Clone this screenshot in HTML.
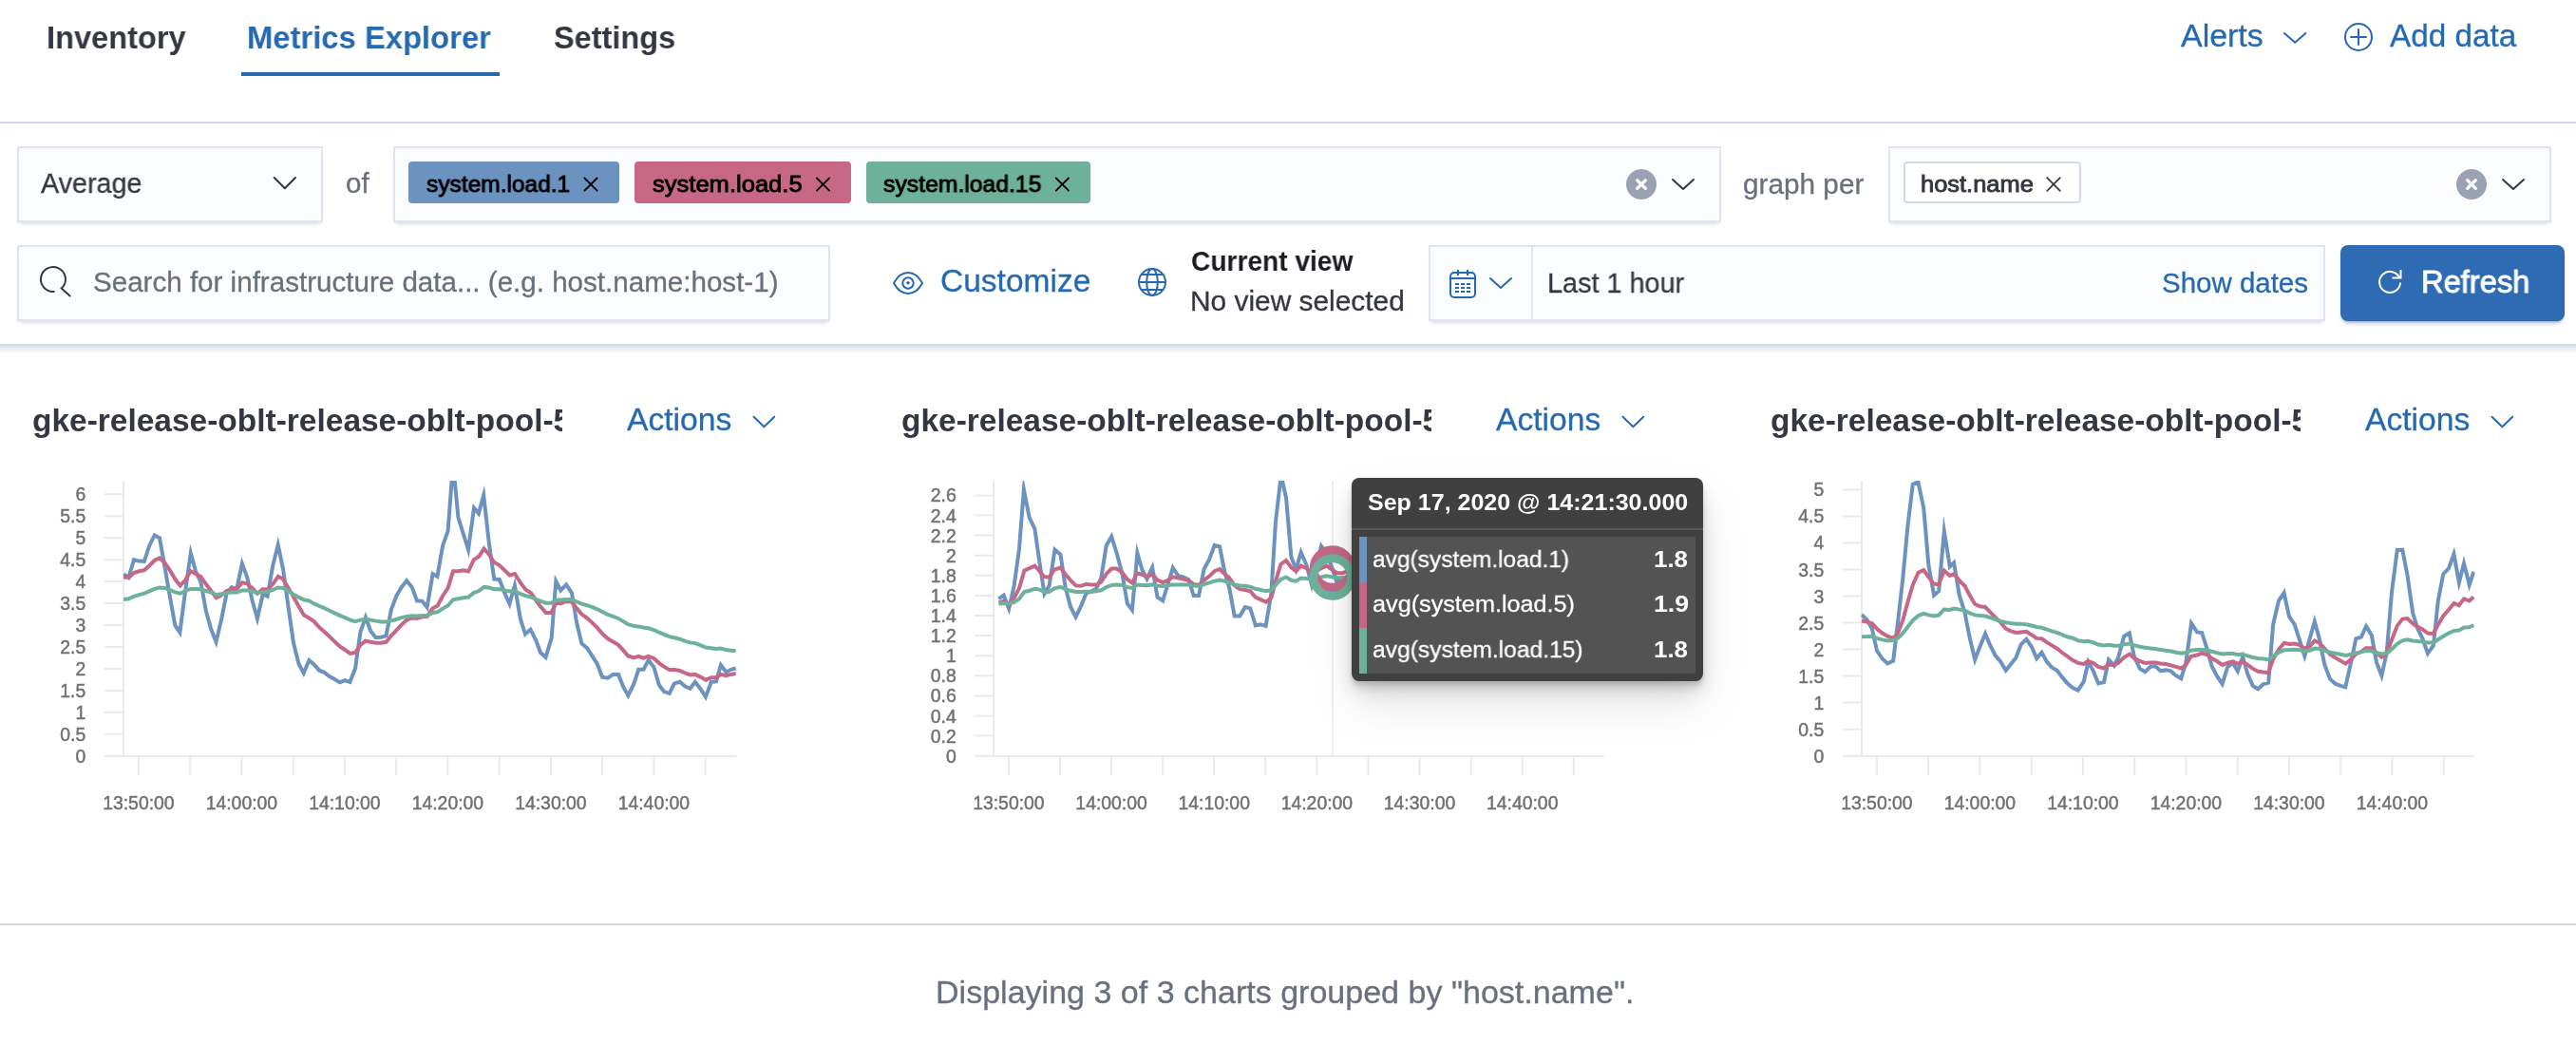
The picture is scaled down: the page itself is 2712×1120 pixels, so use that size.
<!DOCTYPE html>
<html lang="en"><head><meta charset="utf-8"><title>Metrics Explorer</title>
<style>
*{box-sizing:border-box;margin:0;padding:0}
html,body{width:2712px;height:1120px;overflow:hidden;background:#fff}
body{position:relative;font-family:"Liberation Sans",sans-serif;color:#343741}
a{text-decoration:none}
h3,p,label,strong{font-weight:400}
.t{will-change:transform;position:absolute;white-space:nowrap;line-height:1;transform-origin:0 0;display:block}
.t{-webkit-text-stroke:.3px currentColor}
.t.b{font-weight:700;-webkit-text-stroke:0}
.t.m{-webkit-text-stroke:.9px currentColor}
.abs{position:absolute}
.box{position:absolute;background:#fbfcfd;box-shadow:inset 0 0 0 2px #e1e4ef,0 3px 3px -2px rgba(152,162,179,.28),0 6px 5px -4px rgba(152,162,179,.2)}
.pill{position:absolute;top:170px;height:44px;border-radius:4px}
svg{will-change:transform;position:absolute;left:0;top:0;overflow:visible;pointer-events:none}
.ax text{font-family:"Liberation Sans",sans-serif;font-size:19.4px;fill:#707070;stroke:#707070;stroke-width:.45px}
</style></head><body>
<header>
<nav class="tabs">
<a class="t b" style="left:48.73px;top:22.66px;font-size:33.12px;color:#343741;transform:scaleX(0.9843)">Inventory</a>
<a class="t b" style="left:260.02px;top:22.66px;font-size:33.12px;color:#2569b1;transform:scaleX(0.9900)">Metrics Explorer</a>
<div class="abs" style="left:254px;top:76px;width:272px;height:4px;background:#2569b1"></div>
<a class="t b" style="left:582.80px;top:22.66px;font-size:33.12px;color:#343741;transform:scaleX(0.9808)">Settings</a>
</nav>
<div class="header-links">
<a class="t" style="left:2295.65px;top:21.46px;font-size:33.12px;color:#2569b1;transform:scaleX(1.0251)">Alerts</a>
<a class="t" style="left:2516.45px;top:21.46px;font-size:33.12px;color:#2569b1;transform:scaleX(1.0050)">Add data</a>
<svg width="2712" height="1120" viewBox="0 0 2712 1120" fill="none" aria-hidden="true">
<polyline points="2405.0,34.9 2416.2,44.8 2427.3,34.9" stroke="#2569b1" stroke-width="2" stroke-linecap="round" stroke-linejoin="round"/>
<circle cx="2483" cy="39" r="14" stroke="#2569b1" stroke-width="2"/>
<path d="M2475 39H2491M2483 31V47" stroke="#2569b1" stroke-width="2" stroke-linecap="round"/>
</svg>
</div>
<div class="abs" style="left:0;top:128px;width:2712px;height:2px;background:#d0d6e4"></div>
</header>
<section class="toolbar">
<div class="abs" style="left:0;top:362px;width:2712px;height:10px;background:linear-gradient(#d0d5e2,#e4e7ee 35%,rgba(255,255,255,0))"></div>
<div class="row aggregation">
<div class="box" style="left:18px;top:154px;width:322px;height:80px"></div>
<span class="t" style="left:42.95px;top:178.97px;font-size:28.98px;color:#343741;transform:scaleX(0.9910)">Average</span>
<label class="t" style="left:363.93px;top:179.47px;font-size:28.98px;color:#69707d;transform:scaleX(1.0200)">of</label>
<div class="box" style="left:414px;top:154px;width:1398px;height:80px"></div>
<div class="pill" style="left:430px;width:222px;background:#6c92bf"></div>
<span class="t m" style="left:449.44px;top:182.07px;font-size:24.84px;color:#000;transform:scaleX(0.9872)">system.load.1</span>
<div class="pill" style="left:668px;width:228px;background:#c66785"></div>
<span class="t m" style="left:686.76px;top:182.07px;font-size:24.84px;color:#000;transform:scaleX(1.0289)">system.load.5</span>
<div class="pill" style="left:912px;width:236px;background:#6db19a"></div>
<span class="t m" style="left:929.95px;top:182.07px;font-size:24.84px;color:#000;transform:scaleX(0.9966)">system.load.15</span>
<label class="t" style="left:1835.43px;top:179.67px;font-size:28.98px;color:#69707d;transform:scaleX(1.0270)">graph per</label>
<div class="box" style="left:1988px;top:154px;width:698px;height:80px"></div>
<div class="pill" style="left:2004px;width:187px;background:#fff;border:2px solid #d3dae6"></div>
<span class="t m" style="left:2021.74px;top:181.97px;font-size:24.84px;color:#343741;transform:scaleX(1.0250)">host.name</span>
<svg width="2712" height="1120" viewBox="0 0 2712 1120" fill="none" aria-hidden="true">
<polyline points="288.7,187.0 299.9,198.2 311.0,187.0" stroke="#343741" stroke-width="2" stroke-linecap="round" stroke-linejoin="round"/>
<polyline points="1761.0,189.0 1772.0,199.0 1783.0,189.0" stroke="#343741" stroke-width="2" stroke-linecap="round" stroke-linejoin="round"/>
<polyline points="2635.0,189.0 2646.0,199.0 2657.0,189.0" stroke="#343741" stroke-width="2" stroke-linecap="round" stroke-linejoin="round"/>
<circle cx="1728" cy="194" r="16" fill="#9aa1b3"/>
<path d="M1723.6 189.6l8.8 8.8M1732.4 189.6l-8.8 8.8" stroke="#fff" stroke-width="3.2" stroke-linecap="round"/>
<circle cx="2602" cy="194" r="16" fill="#9aa1b3"/>
<path d="M2597.6 189.6l8.8 8.8M2606.4 189.6l-8.8 8.8" stroke="#fff" stroke-width="3.2" stroke-linecap="round"/>
<path d="M615.4 187.5l13.2 13.2M628.6 187.5l-13.2 13.2" stroke="#000" stroke-width="1.8" stroke-linecap="round"/>
<path d="M859.9 187.5l13.2 13.2M873.1 187.5l-13.2 13.2" stroke="#000" stroke-width="1.8" stroke-linecap="round"/>
<path d="M1111.8 187.5l13.2 13.2M1125.0 187.5l-13.2 13.2" stroke="#000" stroke-width="1.8" stroke-linecap="round"/>
<path d="M2155.2 187.2l13.6 13.6M2168.8 187.2l-13.6 13.6" stroke="#343741" stroke-width="1.7" stroke-linecap="round"/>
</svg>
</div>
<div class="row query">
<div class="box" style="left:18px;top:258px;width:856px;height:80px"></div>
<span class="t" style="left:98.43px;top:283.47px;font-size:28.98px;color:#69707d;transform:scaleX(1.0207)">Search for infrastructure data... (e.g. host.name:host-1)</span>
<a class="t" style="left:989.54px;top:279.36px;font-size:33.12px;color:#2569b1;transform:scaleX(1.0124)">Customize</a>
<strong class="t b" style="left:1253.93px;top:260.97px;font-size:28.98px;color:#1a1c21;transform:scaleX(0.9706)">Current view</strong>
<span class="t" style="left:1253.39px;top:303.27px;font-size:28.98px;color:#343741;transform:scaleX(1.0312)">No view selected</span>
<div class="box" style="left:1504px;top:258px;width:944px;height:80px"></div>
<div class="abs" style="left:1612px;top:260px;width:2px;height:76px;background:#e1e4ef"></div>
<span class="t" style="left:1628.56px;top:284.27px;font-size:28.98px;color:#343741;transform:scaleX(0.9945)">Last 1 hour</span>
<a class="t" style="left:2275.64px;top:284.27px;font-size:28.98px;color:#2569b1;transform:scaleX(1.0173)">Show dates</a>
<div class="abs" style="left:2464px;top:258px;width:236px;height:80px;border-radius:8px;background:#2e6bb2;box-shadow:0 4px 5px -2px rgba(46,90,150,.35),0 2px 2px -1px rgba(46,90,150,.3)"></div>
<span class="t m" style="left:2548.67px;top:279.96px;font-size:33.12px;color:#fff;transform:scaleX(0.9866)">Refresh</span>
<svg width="2712" height="1120" viewBox="0 0 2712 1120" fill="none" aria-hidden="true">
<path d="M56.8 306.97A13 13 0 1 1 65.9 302.4M64.4 303.2L73.6 311.5" stroke="#343741" stroke-width="2" stroke-linecap="round"/>
<path d="M941 298C945 290.5 950 287 956 287S967 290.5 971 298C967 305.5 962 309 956 309S945 305.5 941 298Z" stroke="#2569b1" stroke-width="2" stroke-linejoin="round"/>
<circle cx="956" cy="298" r="5.7" stroke="#2569b1" stroke-width="2"/><circle cx="956" cy="297.8" r="1.7" fill="#2569b1"/>
<g stroke="#2569b1" stroke-width="2"><circle cx="1213" cy="297" r="14"/><ellipse cx="1213" cy="297" rx="5.8" ry="14"/><path d="M1199 297H1227M1201.5 289H1224.5M1201.5 305H1224.5"/></g>
<g stroke="#2569b1" stroke-width="2"><rect x="1527" y="287" width="26" height="26" rx="4"/><path d="M1527 293H1553M1535 284V290M1545 284V290"/></g>
<rect x="1532" y="298" width="4" height="2" fill="#2569b1"/>
<rect x="1538" y="298" width="4" height="2" fill="#2569b1"/>
<rect x="1544" y="298" width="4" height="2" fill="#2569b1"/>
<rect x="1532" y="302" width="4" height="2" fill="#2569b1"/>
<rect x="1538" y="302" width="4" height="2" fill="#2569b1"/>
<rect x="1544" y="302" width="4" height="2" fill="#2569b1"/>
<rect x="1532" y="306" width="4" height="2" fill="#2569b1"/>
<rect x="1538" y="306" width="4" height="2" fill="#2569b1"/>
<rect x="1544" y="306" width="4" height="2" fill="#2569b1"/>
<polyline points="1569.0,293.0 1580.0,303.0 1591.0,293.0" stroke="#2569b1" stroke-width="2" stroke-linecap="round" stroke-linejoin="round"/>
<path d="M2526.4 293A11 11 0 1 0 2527.1 297.5M2518.5 292.5H2527.5V284" stroke="#fff" stroke-width="2" stroke-linecap="butt"/>
</svg>
</div>
</section>
<main>
<article class="chart">
<div class="abs" style="left:30.0px;top:420px;width:562.0px;height:52px;overflow:hidden"><h3 class="t b" style="left:4.0px;top:5.97px;font-size:33px;color:#343741;transform:scaleX(1.0142)">gke-release-oblt-release-oblt-pool-5fd2b9c4-x7kq</h3></div>
<a class="t" style="left:659.85px;top:425.46px;font-size:33.12px;color:#2569b1;transform:scaleX(1.0155)">Actions</a>
<svg width="2712" height="1120" viewBox="0 0 2712 1120" fill="none" aria-hidden="true">
<polyline points="793.5,438.7 804.4,449.2 815.2,438.7" stroke="#2569b1" stroke-width="2" stroke-linecap="round" stroke-linejoin="round"/>
<g class="ax">
<path d="M130.1 506V796M110.1 796H775.0" stroke="#eaeaea" stroke-width="2"/>
<path d="M110.1 795.7H130.1M110.1 772.8H130.1M110.1 749.8H130.1M110.1 726.9H130.1M110.1 703.9H130.1M110.1 681.0H130.1M110.1 658.0H130.1M110.1 635.1H130.1M110.1 612.1H130.1M110.1 589.2H130.1M110.1 566.2H130.1M110.1 543.2H130.1M110.1 520.3H130.1M145.9 796V816M200.2 796V816M254.4 796V816M308.6 796V816M362.9 796V816M417.1 796V816M471.4 796V816M525.6 796V816M579.9 796V816M634.1 796V816M688.4 796V816M742.6 796V816" stroke="#eaeaea" stroke-width="2"/>
<text x="90.3" y="802.7" text-anchor="end">0</text>
<text x="90.3" y="779.8" text-anchor="end">0.5</text>
<text x="90.3" y="756.8" text-anchor="end">1</text>
<text x="90.3" y="733.9" text-anchor="end">1.5</text>
<text x="90.3" y="710.9" text-anchor="end">2</text>
<text x="90.3" y="688.0" text-anchor="end">2.5</text>
<text x="90.3" y="665.0" text-anchor="end">3</text>
<text x="90.3" y="642.1" text-anchor="end">3.5</text>
<text x="90.3" y="619.1" text-anchor="end">4</text>
<text x="90.3" y="596.2" text-anchor="end">4.5</text>
<text x="90.3" y="573.2" text-anchor="end">5</text>
<text x="90.3" y="550.2" text-anchor="end">5.5</text>
<text x="90.3" y="527.3" text-anchor="end">6</text>
<text x="145.9" y="852" text-anchor="middle">13:50:00</text>
<text x="254.4" y="852" text-anchor="middle">14:00:00</text>
<text x="362.9" y="852" text-anchor="middle">14:10:00</text>
<text x="471.4" y="852" text-anchor="middle">14:20:00</text>
<text x="579.9" y="852" text-anchor="middle">14:30:00</text>
<text x="688.4" y="852" text-anchor="middle">14:40:00</text>
</g>
<clipPath id="k1"><rect x="129.5" y="506" width="646.1" height="290"/></clipPath><g clip-path="url(#k1)">
<polyline points="130.1,604.4 135.3,608.0 141.1,589.2 146.4,590.6 151.8,591.0 157.2,574.4 162.7,563.4 168.0,566.2 173.5,597.2 178.9,628.2 184.3,658.2 189.4,665.8 195.1,622.0 200.8,582.3 206.0,601.3 211.4,612.7 216.8,642.7 222.2,662.3 227.5,675.7 233.1,652.0 238.5,625.1 244.0,618.1 249.1,620.4 254.9,593.4 260.2,607.5 265.6,632.3 270.9,651.1 276.7,625.6 281.6,627.7 287.3,595.1 292.7,573.5 298.1,599.3 303.5,638.5 309.0,676.8 314.4,698.5 319.7,708.6 325.4,695.0 330.6,699.5 336.1,705.7 341.5,707.8 346.9,712.0 352.3,715.1 357.7,718.2 363.2,716.1 368.4,717.9 374.0,703.7 379.4,665.4 384.9,649.7 390.3,664.4 395.7,671.2 401.1,670.8 406.5,669.1 411.9,641.6 417.4,627.2 422.8,617.9 428.2,611.2 433.6,617.9 439.0,632.3 444.5,632.8 449.6,639.3 455.6,604.1 460.4,606.8 466.1,574.4 471.6,558.9 477.0,487.6 482.4,544.5 487.8,562.0 493.0,578.6 499.0,534.7 503.9,540.6 509.2,521.3 514.9,572.4 520.3,609.6 525.8,610.0 531.2,624.1 536.4,635.6 541.9,616.3 547.9,651.6 553.0,667.4 558.5,662.6 564.4,674.4 568.9,686.8 574.5,691.8 580.7,671.3 585.3,611.9 590.3,621.5 596.2,615.4 602.0,624.3 607.2,655.8 612.4,677.5 618.1,682.2 623.7,690.9 628.9,699.2 634.1,712.6 639.8,713.6 645.4,710.1 651.0,709.9 656.2,722.9 661.3,732.2 667.1,720.5 672.3,704.8 677.5,704.8 682.7,694.8 688.4,702.3 694.0,721.3 699.2,728.1 704.8,729.8 709.9,719.4 715.7,717.8 721.3,722.5 726.6,724.8 731.8,717.8 737.4,725.0 742.9,733.6 748.8,717.8 754.0,717.4 758.9,700.0 764.4,707.5 769.5,704.8 774.6,703.3" stroke="#6c92bf" stroke-width="4" stroke-linejoin="miter" stroke-miterlimit="10" stroke-linecap="butt"/>
<polyline points="130.1,607.5 135.5,607.9 140.9,603.0 146.4,601.3 151.8,600.3 157.2,595.5 162.6,590.0 168.0,587.3 173.5,592.6 178.9,600.3 184.3,609.6 189.7,616.4 195.1,610.6 200.7,601.1 206.0,604.0 211.4,607.1 216.8,614.8 222.2,622.0 227.7,629.2 233.1,626.6 238.5,622.0 243.9,619.9 249.3,619.9 254.8,613.3 260.2,614.4 265.6,618.9 271.0,624.8 276.4,620.3 281.9,620.6 287.3,614.8 292.8,606.8 298.1,609.6 303.5,618.9 309.0,628.2 314.4,638.1 319.8,647.2 325.2,650.5 330.6,654.1 336.1,660.3 341.5,665.0 346.9,670.0 352.3,675.4 357.7,680.3 363.2,684.0 368.6,687.8 374.0,687.1 379.4,678.9 384.8,674.7 390.3,675.8 395.7,676.8 401.1,676.8 406.5,675.8 411.9,669.1 417.4,663.4 422.8,657.6 428.2,652.6 433.6,650.5 439.0,651.0 444.5,649.3 449.9,648.9 455.3,640.6 460.7,637.5 466.1,627.2 471.6,618.9 477.0,601.3 482.4,601.3 487.8,600.3 493.1,601.5 498.7,589.3 504.1,585.8 509.5,577.5 514.9,583.7 520.3,592.0 525.8,595.1 531.2,600.3 536.6,605.5 542.0,604.0 547.9,613.4 553.4,620.6 559.0,624.3 564.4,632.0 568.9,638.2 574.7,645.0 580.3,645.0 585.5,634.7 590.6,635.1 596.2,633.0 601.6,633.4 607.2,640.3 612.4,646.5 618.1,650.6 623.7,655.8 628.9,660.9 634.1,667.1 639.8,672.3 645.4,675.4 651.0,678.9 656.2,684.7 661.3,690.5 667.1,692.4 672.3,690.9 677.5,692.6 682.6,690.9 688.4,693.0 694.0,698.1 699.2,701.9 704.8,705.0 709.9,705.0 715.7,706.0 721.3,708.5 726.7,710.5 731.8,709.9 737.4,712.6 743.0,715.7 748.8,713.2 754.0,713.2 758.7,709.9 764.3,711.2 769.5,709.9 774.6,709.1" stroke="#c66785" stroke-width="4" stroke-linejoin="miter" stroke-miterlimit="10" stroke-linecap="butt"/>
<polyline points="130.1,630.9 135.5,630.3 140.9,627.8 146.4,626.1 151.8,624.7 157.2,622.4 162.6,619.9 168.0,618.5 173.5,618.9 178.9,621.0 184.3,623.4 189.7,624.7 195.1,622.0 200.6,619.9 206.0,619.9 211.4,620.3 216.8,622.0 222.2,623.7 227.7,626.1 233.1,625.3 238.5,624.1 243.9,623.4 249.3,623.4 254.8,621.6 260.2,621.4 265.6,622.4 271.0,624.1 276.4,623.0 281.9,623.0 287.3,621.0 292.7,618.5 298.1,618.9 303.5,622.0 309.0,625.7 314.4,628.6 319.8,631.3 325.2,632.3 330.6,635.4 336.1,637.9 341.5,640.2 346.9,642.7 352.3,645.4 357.7,647.8 363.2,650.1 368.6,652.6 374.0,654.1 379.4,652.6 384.8,651.6 390.3,652.6 395.7,653.6 401.1,654.5 406.5,654.5 411.9,653.4 417.4,652.0 422.8,650.1 428.2,648.9 433.6,648.3 439.0,648.5 444.5,648.1 449.9,647.8 455.3,645.2 460.7,644.1 466.1,640.6 471.6,637.5 477.0,631.3 482.4,630.3 487.8,629.2 493.2,628.6 498.7,624.1 504.1,622.0 509.5,617.9 514.9,618.5 520.3,620.3 525.8,620.3 531.2,621.4 536.6,622.4 542.0,622.0 547.9,625.2 553.4,627.2 559.0,628.5 564.4,631.0 568.9,632.6 574.7,634.7 580.3,634.7 585.5,631.4 590.6,631.4 596.2,631.0 601.6,631.0 607.2,633.4 612.4,635.7 618.1,637.2 623.7,639.2 628.9,641.3 634.1,644.0 639.8,646.9 645.4,648.9 651.0,651.0 656.2,654.1 661.3,657.2 667.1,658.9 672.3,659.5 677.5,660.5 682.6,661.3 688.4,663.0 694.0,665.7 699.2,667.8 704.8,670.2 709.9,671.3 715.7,672.7 721.3,674.8 726.7,676.4 731.8,677.1 737.4,679.1 743.0,681.6 748.8,682.2 754.0,683.0 758.7,682.6 764.3,684.1 769.5,684.7 774.6,685.1" stroke="#6db19a" stroke-width="4" stroke-linejoin="miter" stroke-miterlimit="10" stroke-linecap="butt"/>
</g>
</svg>
</article>
<article class="chart">
<div class="abs" style="left:945.0px;top:420px;width:562.0px;height:52px;overflow:hidden"><h3 class="t b" style="left:4.0px;top:5.97px;font-size:33px;color:#343741;transform:scaleX(1.0142)">gke-release-oblt-release-oblt-pool-5fd2b9c4-x7kq</h3></div>
<a class="t" style="left:1574.85px;top:425.46px;font-size:33.12px;color:#2569b1;transform:scaleX(1.0155)">Actions</a>
<svg width="2712" height="1120" viewBox="0 0 2712 1120" fill="none" aria-hidden="true">
<polyline points="1708.5,438.7 1719.3,449.2 1730.2,438.7" stroke="#2569b1" stroke-width="2" stroke-linecap="round" stroke-linejoin="round"/>
<g class="ax">
<path d="M1046.1 506V796M1026.1 796H1688.8" stroke="#eaeaea" stroke-width="2"/>
<path d="M1026.1 795.7H1046.1M1026.1 774.6H1046.1M1026.1 753.5H1046.1M1026.1 732.4H1046.1M1026.1 711.3H1046.1M1026.1 690.2H1046.1M1026.1 669.1H1046.1M1026.1 648.0H1046.1M1026.1 626.9H1046.1M1026.1 605.8H1046.1M1026.1 584.7H1046.1M1026.1 563.6H1046.1M1026.1 542.5H1046.1M1026.1 521.4H1046.1M1061.9 796V816M1116.0 796V816M1170.1 796V816M1224.1 796V816M1278.2 796V816M1332.3 796V816M1386.4 796V816M1440.5 796V816M1494.5 796V816M1548.6 796V816M1602.7 796V816M1656.8 796V816" stroke="#eaeaea" stroke-width="2"/>
<text x="1006.8" y="802.7" text-anchor="end">0</text>
<text x="1006.8" y="781.6" text-anchor="end">0.2</text>
<text x="1006.8" y="760.5" text-anchor="end">0.4</text>
<text x="1006.8" y="739.4" text-anchor="end">0.6</text>
<text x="1006.8" y="718.3" text-anchor="end">0.8</text>
<text x="1006.8" y="697.2" text-anchor="end">1</text>
<text x="1006.8" y="676.1" text-anchor="end">1.2</text>
<text x="1006.8" y="655.0" text-anchor="end">1.4</text>
<text x="1006.8" y="633.9" text-anchor="end">1.6</text>
<text x="1006.8" y="612.8" text-anchor="end">1.8</text>
<text x="1006.8" y="591.7" text-anchor="end">2</text>
<text x="1006.8" y="570.6" text-anchor="end">2.2</text>
<text x="1006.8" y="549.5" text-anchor="end">2.4</text>
<text x="1006.8" y="528.4" text-anchor="end">2.6</text>
<text x="1061.9" y="852" text-anchor="middle">13:50:00</text>
<text x="1170.1" y="852" text-anchor="middle">14:00:00</text>
<text x="1278.2" y="852" text-anchor="middle">14:10:00</text>
<text x="1386.4" y="852" text-anchor="middle">14:20:00</text>
<text x="1494.5" y="852" text-anchor="middle">14:30:00</text>
<text x="1602.7" y="852" text-anchor="middle">14:40:00</text>
</g>
<path d="M1403 506V796" stroke="#e6e6e6" stroke-width="1.3"/>
<clipPath id="k2"><rect x="1045.5" y="506" width="643.9" height="290"/></clipPath><g clip-path="url(#k2)">
<polyline points="1051.5,630.3 1056.7,626.6 1062.2,640.6 1067.6,616.8 1073.0,577.8 1077.9,515.3 1083.7,544.8 1089.4,556.7 1094.1,589.7 1099.5,625.1 1104.6,616.8 1110.5,578.7 1116.5,583.8 1121.7,618.4 1127.1,638.7 1132.5,649.4 1138.1,637.9 1143.6,624.4 1149.1,622.7 1154.2,619.3 1159.3,608.3 1164.7,574.5 1170.2,564.8 1175.4,581.2 1181.3,603.2 1186.9,635.4 1191.9,642.1 1197.4,582.2 1202.4,599.8 1207.5,609.5 1213.2,597.2 1218.5,628.6 1224.2,632.3 1229.5,615.1 1234.8,597.7 1240.2,605.8 1245.6,607.4 1251.2,610.0 1256.7,626.9 1262.1,626.9 1267.6,599.0 1273.1,588.8 1278.7,573.9 1284.1,575.3 1289.2,601.5 1294.3,619.3 1299.7,648.6 1305.3,648.6 1310.9,639.1 1316.3,640.4 1321.9,658.5 1327.3,657.4 1332.6,659.0 1338.3,625.2 1343.0,549.1 1348.7,500.3 1354.0,523.7 1359.4,586.3 1364.4,599.4 1369.7,581.4 1375.5,594.8 1380.9,615.4 1385.7,594.8 1391.0,574.8 1396.7,582.9 1402.6,598.1 1407.8,614.2 1413.6,608.3 1429.7,608.3" stroke="#6c92bf" stroke-width="4" stroke-linejoin="miter" stroke-miterlimit="10" stroke-linecap="butt"/>
<polyline points="1051.5,634.5 1056.9,632.8 1062.3,635.9 1067.6,629.4 1073.0,619.3 1078.4,600.7 1083.7,598.1 1089.4,595.6 1094.1,600.7 1099.2,606.9 1104.6,607.8 1110.2,599.5 1116.5,597.6 1121.7,604.6 1127.1,610.8 1132.6,616.4 1138.1,616.8 1143.6,614.7 1149.1,615.6 1154.2,615.6 1159.3,612.5 1164.7,604.1 1170.3,598.5 1175.4,598.6 1181.3,602.4 1186.9,610.0 1192.2,613.7 1197.1,603.2 1202.4,604.9 1207.5,606.9 1213.4,604.9 1218.5,610.5 1224.4,613.0 1229.5,610.8 1234.6,607.4 1240.2,608.3 1245.6,609.6 1251.2,610.8 1256.7,615.1 1262.1,615.9 1267.6,610.8 1273.1,606.6 1278.6,601.2 1284.1,599.0 1289.2,604.1 1294.3,608.3 1299.7,616.4 1305.3,620.1 1310.9,621.0 1316.3,622.2 1321.7,628.6 1327.3,631.1 1332.9,633.7 1338.3,629.4 1343.0,611.7 1348.4,593.9 1354.0,590.0 1359.4,597.3 1364.5,601.2 1369.6,595.6 1375.5,598.1 1381.0,604.6 1385.7,601.5 1390.7,598.1 1396.7,595.6 1402.6,599.8 1407.7,603.2 1413.6,603.2 1417.8,601.5 1429.7,601.5" stroke="#c66785" stroke-width="4" stroke-linejoin="miter" stroke-miterlimit="10" stroke-linecap="butt"/>
<polyline points="1051.5,635.4 1056.9,634.9 1062.3,635.4 1067.6,634.0 1073.0,630.3 1078.4,623.0 1083.7,621.8 1089.4,619.8 1094.1,620.6 1099.2,622.7 1104.6,623.0 1110.2,619.3 1116.5,617.9 1121.7,620.1 1127.1,621.8 1132.6,623.0 1138.1,623.0 1143.6,622.7 1149.1,622.7 1154.2,622.3 1159.3,621.3 1164.7,618.1 1170.3,615.9 1175.4,615.6 1181.3,615.9 1186.9,618.1 1192.3,619.0 1197.0,615.6 1202.4,615.9 1207.5,616.2 1213.4,615.4 1218.5,616.4 1224.4,617.1 1229.5,616.4 1234.6,615.4 1240.2,615.4 1245.6,615.4 1251.2,615.4 1256.7,616.4 1262.1,616.8 1267.6,615.1 1273.1,613.4 1278.6,611.7 1284.1,610.5 1289.2,611.7 1294.3,613.4 1299.7,615.6 1305.3,616.4 1310.9,616.8 1316.3,617.6 1321.7,619.8 1327.3,621.0 1332.9,622.2 1338.3,621.0 1343.0,615.9 1348.4,610.0 1354.0,607.4 1359.4,610.8 1364.5,611.7 1369.6,608.6 1375.5,609.1 1380.9,609.6 1385.7,608.3 1390.7,607.4 1396.7,606.3 1402.6,607.4 1407.7,608.3 1413.6,608.3 1417.8,607.4 1429.7,607.4" stroke="#6db19a" stroke-width="4" stroke-linejoin="miter" stroke-miterlimit="10" stroke-linecap="butt"/>
</g>
<circle cx="1402.8" cy="603.1" r="19.8" stroke="#6c92bf" stroke-width="8.6"/>
<circle cx="1402.8" cy="598.3" r="19.8" stroke="#c66785" stroke-width="8.6"/>
<circle cx="1402.8" cy="607.6" r="19.8" stroke="#6db19a" stroke-width="8.6"/>
</svg>
</article>
<article class="chart">
<div class="abs" style="left:1860.0px;top:420px;width:562.0px;height:52px;overflow:hidden"><h3 class="t b" style="left:4.0px;top:5.97px;font-size:33px;color:#343741;transform:scaleX(1.0142)">gke-release-oblt-release-oblt-pool-5fd2b9c4-x7kq</h3></div>
<a class="t" style="left:2489.85px;top:425.46px;font-size:33.12px;color:#2569b1;transform:scaleX(1.0155)">Actions</a>
<svg width="2712" height="1120" viewBox="0 0 2712 1120" fill="none" aria-hidden="true">
<polyline points="2623.5,438.7 2634.3,449.2 2645.2,438.7" stroke="#2569b1" stroke-width="2" stroke-linecap="round" stroke-linejoin="round"/>
<g class="ax">
<path d="M1960.0 506V796M1940.0 796H2605.0" stroke="#eaeaea" stroke-width="2"/>
<path d="M1940.0 795.7H1960.0M1940.0 767.7H1960.0M1940.0 739.6H1960.0M1940.0 711.6H1960.0M1940.0 683.6H1960.0M1940.0 655.5H1960.0M1940.0 627.5H1960.0M1940.0 599.5H1960.0M1940.0 571.4H1960.0M1940.0 543.4H1960.0M1940.0 515.4H1960.0M1975.9 796V816M2030.2 796V816M2084.4 796V816M2138.7 796V816M2192.9 796V816M2247.2 796V816M2301.4 796V816M2355.7 796V816M2409.9 796V816M2464.2 796V816M2518.4 796V816M2572.7 796V816" stroke="#eaeaea" stroke-width="2"/>
<text x="1920.2" y="802.7" text-anchor="end">0</text>
<text x="1920.2" y="774.7" text-anchor="end">0.5</text>
<text x="1920.2" y="746.6" text-anchor="end">1</text>
<text x="1920.2" y="718.6" text-anchor="end">1.5</text>
<text x="1920.2" y="690.6" text-anchor="end">2</text>
<text x="1920.2" y="662.5" text-anchor="end">2.5</text>
<text x="1920.2" y="634.5" text-anchor="end">3</text>
<text x="1920.2" y="606.5" text-anchor="end">3.5</text>
<text x="1920.2" y="578.4" text-anchor="end">4</text>
<text x="1920.2" y="550.4" text-anchor="end">4.5</text>
<text x="1920.2" y="522.4" text-anchor="end">5</text>
<text x="1975.9" y="852" text-anchor="middle">13:50:00</text>
<text x="2084.4" y="852" text-anchor="middle">14:00:00</text>
<text x="2192.9" y="852" text-anchor="middle">14:10:00</text>
<text x="2301.4" y="852" text-anchor="middle">14:20:00</text>
<text x="2409.9" y="852" text-anchor="middle">14:30:00</text>
<text x="2518.4" y="852" text-anchor="middle">14:40:00</text>
</g>
<clipPath id="k3"><rect x="1959.4" y="506" width="646.2" height="290"/></clipPath><g clip-path="url(#k3)">
<polyline points="1959.9,647.0 1965.6,652.4 1971.0,662.1 1975.9,684.8 1981.8,693.5 1987.2,698.4 1993.2,695.6 1998.0,655.6 2003.4,608.1 2008.4,554.0 2013.8,509.7 2019.4,507.4 2025.2,534.6 2030.4,595.1 2036.1,626.6 2041.2,622.1 2046.8,559.0 2052.8,596.5 2057.1,592.4 2062.8,626.5 2068.5,644.8 2073.6,670.8 2079.2,694.4 2084.5,680.5 2090.1,666.9 2095.3,679.4 2100.7,690.2 2106.1,696.3 2111.7,705.7 2117.1,698.9 2122.3,692.4 2127.7,678.3 2133.3,672.8 2138.7,680.5 2144.2,693.0 2149.5,686.7 2154.9,696.7 2160.3,702.6 2165.7,705.8 2171.1,712.9 2176.5,719.4 2182.2,724.0 2187.7,726.7 2193.7,717.7 2198.5,696.7 2203.6,705.8 2209.2,719.4 2215.0,718.1 2220.0,694.5 2225.8,700.7 2230.2,692.0 2236.1,669.9 2241.8,666.4 2247.0,691.6 2252.9,703.9 2258.3,707.2 2264.2,701.5 2269.3,701.5 2274.6,706.2 2280.2,705.4 2285.5,706.4 2290.8,711.2 2296.2,714.2 2301.3,697.9 2307.0,656.1 2313.1,665.4 2318.1,666.0 2323.6,683.1 2328.5,700.9 2333.9,711.4 2339.6,719.9 2345.3,701.9 2350.6,697.8 2355.8,706.4 2361.1,691.7 2366.4,709.8 2371.8,722.0 2377.3,725.2 2382.8,720.1 2388.2,718.7 2393.1,657.5 2399.0,632.4 2404.6,624.1 2410.0,648.9 2415.6,657.2 2420.9,673.3 2426.3,690.7 2431.7,672.3 2436.8,654.2 2442.0,673.3 2447.2,699.2 2453.0,714.7 2458.6,719.8 2464.1,721.9 2469.3,723.2 2475.1,697.1 2480.3,672.3 2485.8,670.6 2491.1,659.3 2496.8,668.6 2502.0,697.1 2507.4,711.3 2512.7,686.8 2518.1,622.7 2523.8,578.9 2529.3,578.7 2534.6,606.1 2540.2,645.4 2545.4,662.0 2550.5,672.3 2555.9,687.8 2561.9,679.5 2566.7,633.0 2572.2,604.5 2578.0,598.3 2583.4,583.2 2588.9,613.3 2594.0,593.1 2599.7,615.6 2604.3,602.0" stroke="#6c92bf" stroke-width="4" stroke-linejoin="miter" stroke-miterlimit="10" stroke-linecap="butt"/>
<polyline points="1959.9,653.5 1965.6,654.6 1971.0,656.3 1975.9,661.7 1981.8,666.5 1987.2,669.7 1993.2,671.9 1998.0,666.5 2003.4,652.4 2008.4,634.0 2013.8,615.7 2019.6,602.7 2025.2,600.1 2030.4,607.4 2035.8,614.6 2041.1,615.4 2046.8,600.6 2052.7,605.9 2057.4,604.2 2062.8,611.3 2068.5,616.7 2073.6,626.5 2079.1,635.8 2084.5,638.3 2090.1,639.0 2095.3,644.4 2100.7,649.8 2106.1,655.2 2111.7,661.7 2117.1,664.3 2122.3,666.0 2127.7,665.4 2133.3,664.7 2138.7,668.2 2144.1,671.9 2149.5,672.3 2154.9,676.2 2160.3,679.4 2165.7,682.7 2171.1,687.0 2176.5,690.9 2182.2,695.0 2187.8,697.9 2193.7,698.9 2198.2,696.0 2203.6,697.9 2209.1,701.9 2215.0,703.5 2219.8,699.5 2225.9,699.9 2230.2,697.9 2236.1,692.0 2242.1,688.5 2247.0,693.0 2252.9,696.0 2258.3,697.9 2264.2,697.4 2269.3,697.6 2274.6,698.5 2280.2,698.9 2285.5,700.3 2290.8,701.9 2296.4,703.5 2301.3,699.9 2306.6,691.0 2313.1,689.5 2318.1,687.7 2323.6,689.1 2328.5,693.0 2333.9,696.0 2339.8,699.9 2345.3,697.6 2350.7,696.4 2356.0,698.5 2361.1,696.4 2366.4,699.9 2371.8,703.9 2377.3,706.8 2382.8,707.4 2388.0,708.2 2393.1,694.0 2399.0,683.7 2404.8,676.8 2410.0,677.9 2415.6,677.5 2420.9,678.9 2426.3,682.6 2431.7,680.6 2436.8,674.4 2442.0,676.8 2447.2,682.6 2453.0,688.8 2458.6,692.4 2464.1,695.5 2469.5,698.6 2475.1,694.0 2480.3,688.4 2485.8,686.1 2491.0,682.2 2496.8,682.2 2502.0,687.2 2507.5,691.7 2512.7,687.2 2518.1,673.3 2523.7,658.9 2529.3,651.6 2534.6,651.0 2540.2,656.4 2545.4,659.9 2550.5,662.4 2555.7,666.5 2561.9,667.1 2566.7,657.8 2572.2,648.5 2578.0,641.7 2583.7,634.9 2588.7,637.3 2594.0,630.3 2599.5,632.4 2604.3,628.5" stroke="#c66785" stroke-width="4" stroke-linejoin="miter" stroke-miterlimit="10" stroke-linecap="butt"/>
<polyline points="1959.9,670.3 1965.6,670.1 1971.0,669.7 1975.9,671.9 1981.8,673.4 1987.2,674.4 1993.2,674.0 1998.0,671.9 2003.4,666.5 2008.4,660.0 2013.8,653.0 2019.6,648.1 2025.2,645.9 2030.4,647.4 2035.8,648.5 2041.2,647.6 2046.6,641.6 2052.7,642.0 2057.4,640.5 2062.8,641.6 2068.5,642.7 2073.6,645.3 2079.1,647.4 2084.5,648.1 2090.1,648.5 2095.3,650.2 2100.7,652.0 2106.1,653.9 2111.7,655.2 2117.1,656.1 2122.3,656.7 2127.7,656.7 2133.3,657.2 2138.7,658.5 2144.1,660.0 2149.5,660.8 2154.9,662.6 2160.3,664.3 2165.7,666.0 2171.1,668.2 2176.5,670.3 2182.2,671.7 2187.8,674.3 2193.7,675.2 2198.2,674.8 2203.6,676.2 2209.1,678.6 2215.0,679.4 2219.8,678.8 2225.9,679.8 2230.2,679.8 2236.1,678.2 2242.1,677.6 2247.0,679.2 2252.9,680.8 2258.3,681.8 2264.2,682.5 2269.3,683.1 2274.6,684.1 2280.2,684.7 2285.5,685.5 2290.8,686.7 2296.4,687.7 2301.3,687.1 2306.6,684.7 2313.1,684.1 2318.1,683.7 2323.6,684.5 2328.5,685.7 2333.9,687.1 2339.8,688.5 2345.3,688.1 2350.7,688.1 2356.0,689.1 2361.1,688.7 2366.4,690.4 2371.8,692.0 2377.3,693.0 2382.8,693.6 2388.2,694.4 2393.1,691.0 2399.0,686.8 2404.8,684.3 2410.0,684.1 2415.6,683.7 2420.9,684.3 2426.3,685.3 2431.7,684.7 2436.8,682.6 2442.0,683.0 2447.2,684.7 2453.0,686.8 2458.6,687.8 2464.1,688.8 2469.5,689.9 2475.1,688.8 2480.3,687.4 2485.8,686.4 2491.0,685.1 2496.8,685.3 2502.0,687.2 2507.5,688.4 2512.7,687.8 2518.1,683.3 2523.7,677.9 2529.3,674.4 2534.6,673.3 2540.2,674.4 2545.4,675.0 2550.5,675.4 2555.7,676.4 2561.9,676.4 2566.7,673.3 2572.2,669.8 2578.0,666.5 2583.6,664.0 2588.8,663.6 2594.0,660.5 2599.5,660.3 2604.3,658.2" stroke="#6db19a" stroke-width="4" stroke-linejoin="miter" stroke-miterlimit="10" stroke-linecap="butt"/>
</g>
</svg>
</article>
<div class="tooltip" role="tooltip">
<div class="abs" style="left:1423px;top:503px;width:370px;height:214px;border-radius:8px;background:#404040;box-shadow:0 24px 48px rgba(0,0,0,.1),0 12px 24px rgba(0,0,0,.1),0 8px 8px rgba(0,0,0,.1),0 4px 4px rgba(0,0,0,.1)"><div class="abs" style="left:0;top:52.5px;width:370px;height:2px;background:#595959"></div><div class="abs" style="left:8px;top:62px;width:354px;height:144px;background:#535353"></div><div class="abs" style="left:8px;top:62px;width:8px;height:48px;background:#6c92bf"></div><div class="abs" style="left:8px;top:110px;width:8px;height:48px;background:#c66785"></div><div class="abs" style="left:8px;top:158px;width:8px;height:48px;background:#6db19a"></div></div>
<strong class="t b" style="left:1439.50px;top:517.17px;font-size:24.84px;color:#fff;transform:scaleX(1.0072)">Sep 17, 2020 @ 14:21:30.000</strong>
<span class="t" style="left:1444.96px;top:576.67px;font-size:24.84px;color:#fff;transform:scaleX(0.9871)">avg(system.load.1)</span>
<strong class="t b" style="left:1741.46px;top:576.67px;font-size:24.84px;color:#fff;transform:scaleX(1.0443)">1.8</strong>
<span class="t" style="left:1444.94px;top:624.37px;font-size:24.84px;color:#fff;transform:scaleX(1.0155)">avg(system.load.5)</span>
<strong class="t b" style="left:1741.42px;top:624.37px;font-size:24.84px;color:#fff;transform:scaleX(1.0762)">1.9</strong>
<span class="t" style="left:1444.96px;top:672.47px;font-size:24.84px;color:#fff;transform:scaleX(0.9911)">avg(system.load.15)</span>
<strong class="t b" style="left:1741.46px;top:672.47px;font-size:24.84px;color:#fff;transform:scaleX(1.0443)">1.8</strong>
</div>
</main>
<footer>
<div class="abs" style="left:0;top:972px;width:2712px;height:2px;background:#d3dae6"></div>
<p class="t" style="left:984.50px;top:1027.56px;font-size:33.12px;color:#69707d;transform:scaleX(1.0278)">Displaying 3 of 3 charts grouped by &quot;host.name&quot;.</p>
</footer>
</body></html>
